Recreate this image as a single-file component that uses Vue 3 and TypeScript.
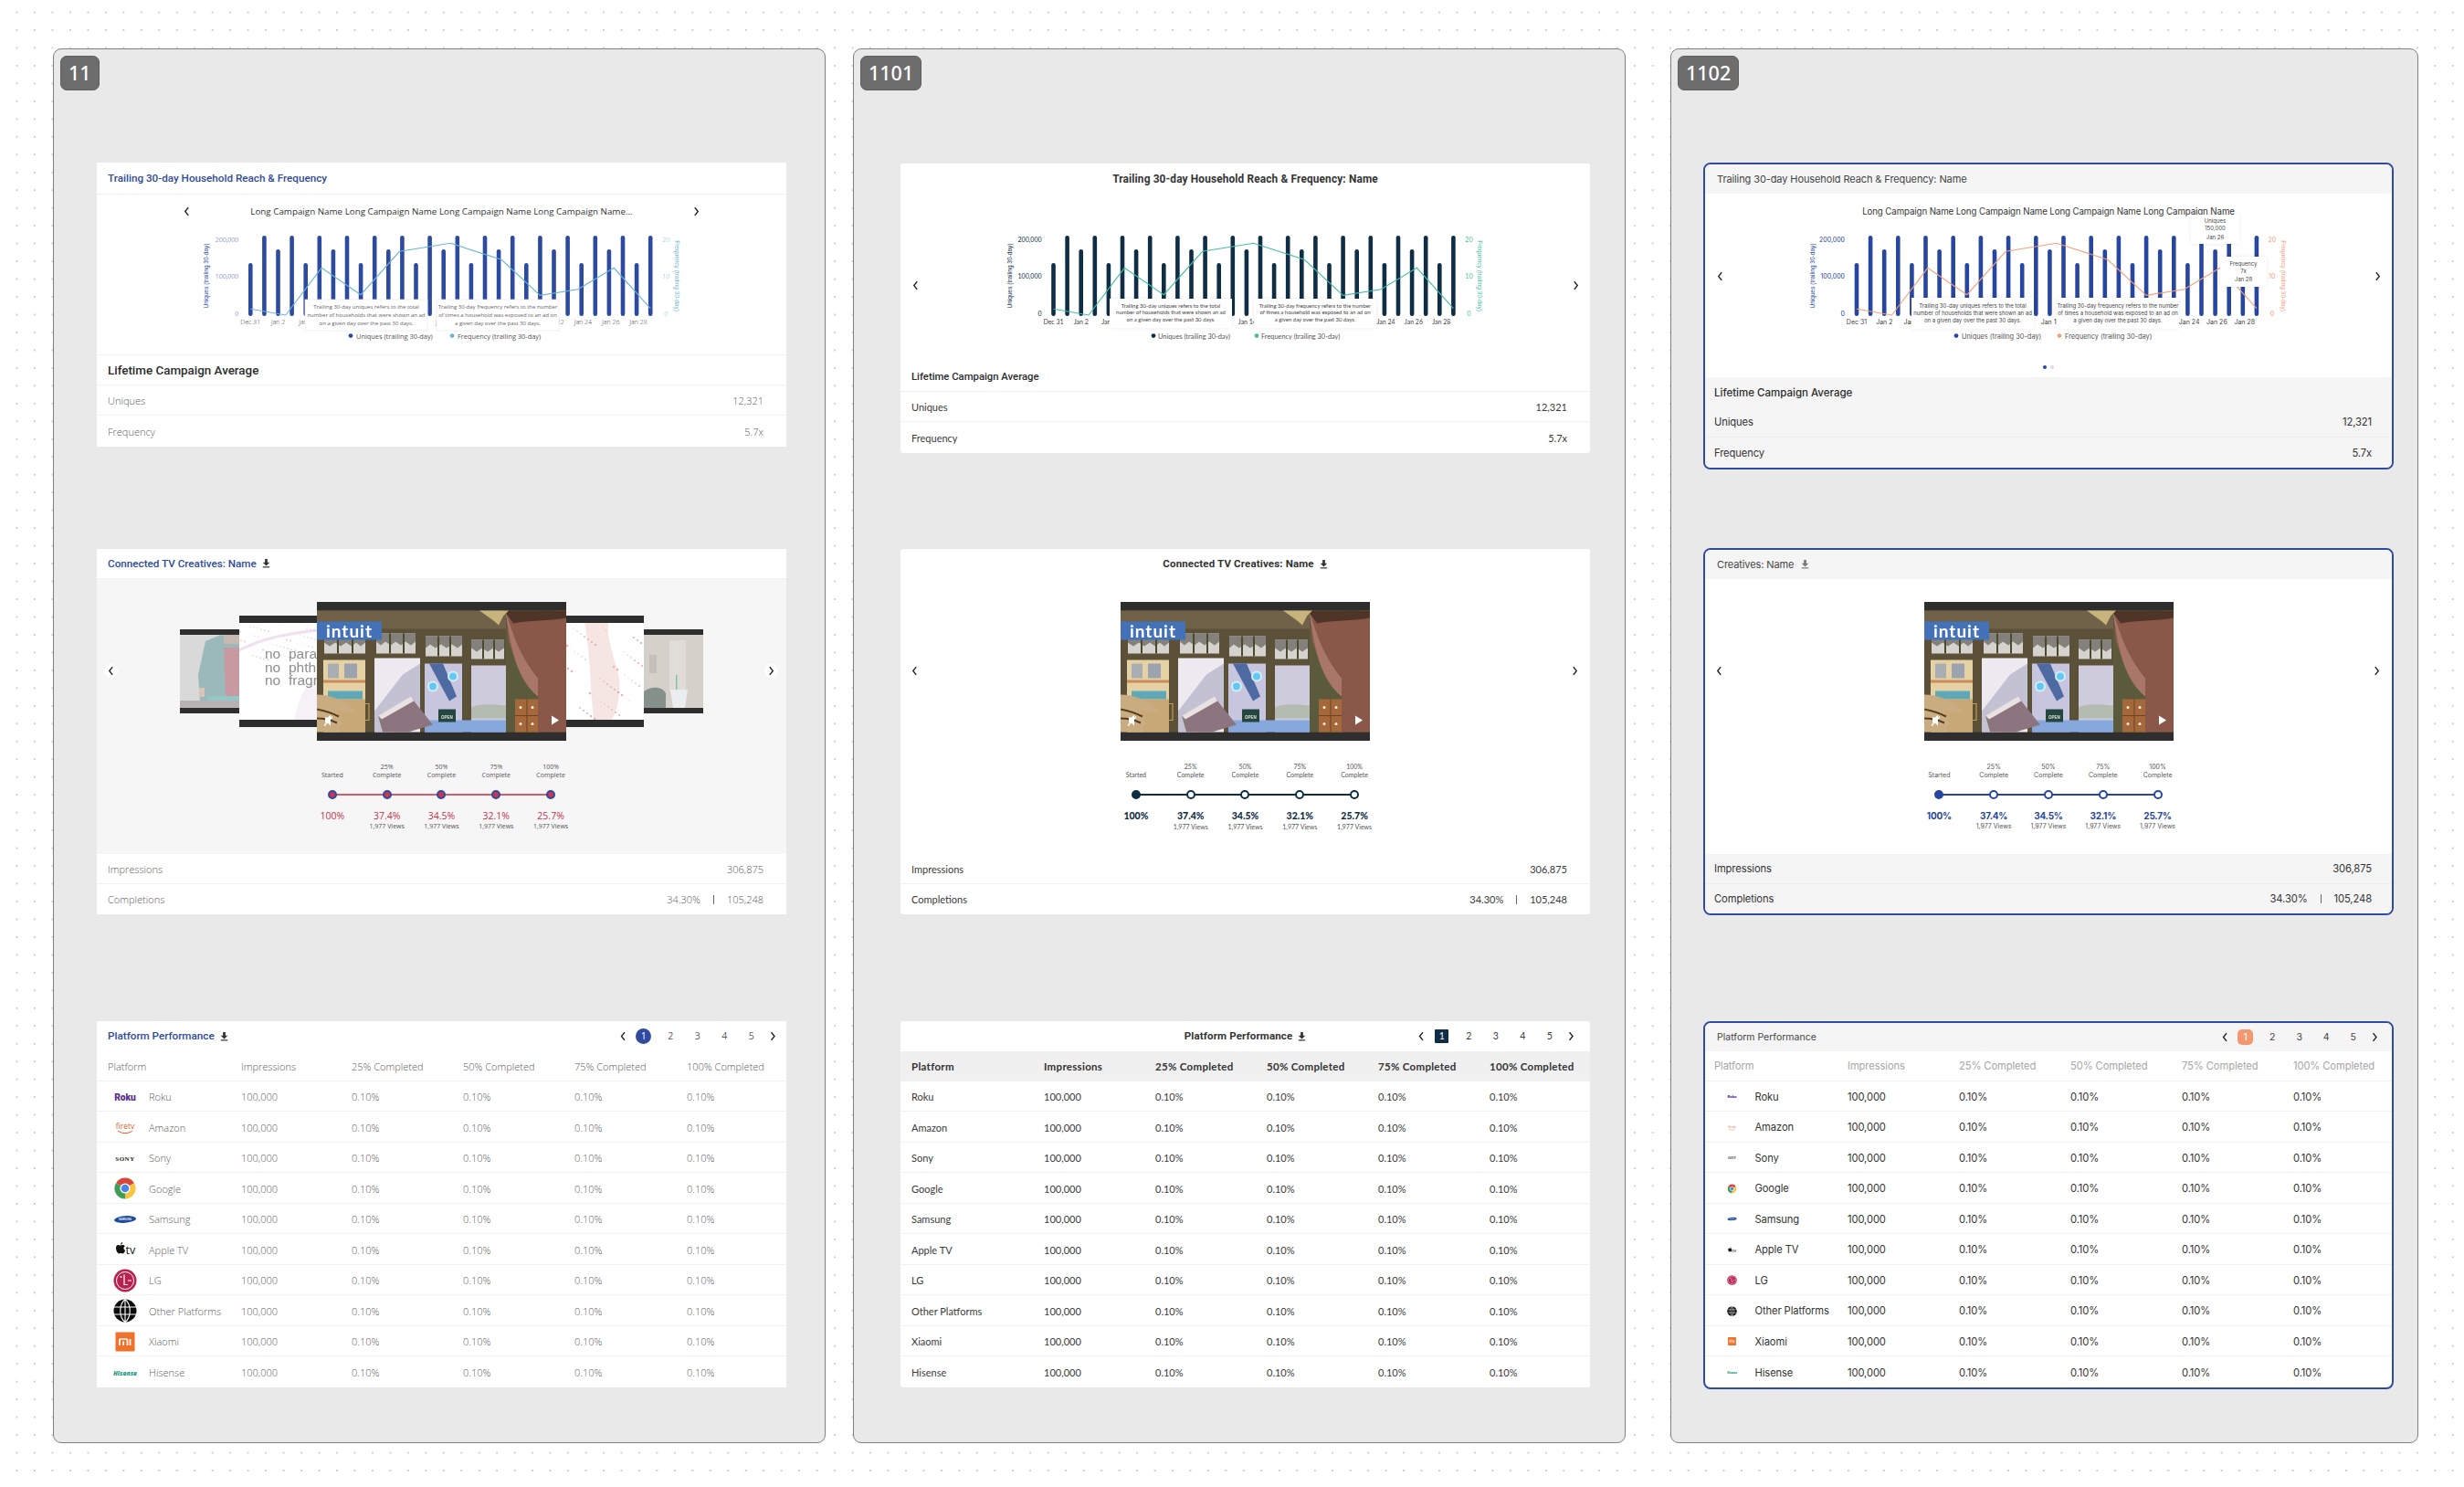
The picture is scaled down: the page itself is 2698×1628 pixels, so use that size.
<script setup lang="ts">
interface FrameConfig {
  id: string
  variant: 'a' | 'b' | 'c'
  reachTitle: string
  chartTitle: string
  creativeTitle: string
  x0: number
  barColor: string
  lineColor: string
  tipA: number
  tipB: number
  tipTop: number
  tipH: number
  tipLines: number[]
  legend: number[]
}

const frames: FrameConfig[] = [
  {
    id: '11', variant: 'a',
    reachTitle: 'Trailing 30-day Household Reach & Frequency',
    chartTitle: 'Long Campaign Name Long Campaign Name Long Campaign Name Long Campaign Name...',
    creativeTitle: 'Connected TV Creatives: Name',
    x0: 168.3, barColor: '#2c4a9f', lineColor: '#6cb4d8',
    tipA: 228, tipB: 372, tipTop: 77, tipH: 34, tipLines: [87, 96, 105],
    legend: [278, 284, 389, 395],
  },
  {
    id: '1101', variant: 'b',
    reachTitle: 'Trailing 30-day Household Reach & Frequency: Name',
    chartTitle: '',
    creativeTitle: 'Connected TV Creatives: Name',
    x0: 167.5, barColor: '#0f2d45', lineColor: '#45bfa0',
    tipA: 229, tipB: 387, tipTop: 76, tipH: 32, tipLines: [85.5, 93, 100.5],
    legend: [277, 282, 390, 395],
  },
  {
    id: '1102', variant: 'c',
    reachTitle: 'Trailing 30-day Household Reach & Frequency: Name',
    chartTitle: 'Long Campaign Name Long Campaign Name Long Campaign Name Long Campaign Name',
    creativeTitle: 'Creatives: Name',
    x0: 166, barColor: '#2746a0', lineColor: '#f4a07a',
    tipA: 226, tipB: 385, tipTop: 75, tipH: 34, tipLines: [86, 94, 102],
    legend: [275, 281, 388, 394],
  },
]

const STEP = 15.1
const DATE_STEP = 15.17
const barHeights = [58, 88, 73, 88]
const bars = Array.from({ length: 30 }, (_, i) => ({ i, h: barHeights[i % 4] }))
const linePts: [number, number][] = [
  [0, 87.3], [2.55, 94], [5.15, 42.3], [8, 71.7], [10.8, 24.3], [14.5, 15.3],
  [18.2, 33.3], [21, 72.3], [23.75, 65.7], [26.35, 42.3], [29, 86.7],
]
const linePath = (x0: number) => linePts.map(([i, y]) => `${x0 + i * STEP},${y}`).join(' ')

// dates that sit fully behind the two info tooltips are left out
const hiddenDates = [6, 8, 10, 12, 16, 18, 20]
const dateLabels = (variant: string) =>
  Array.from({ length: 15 }, (_, i) => ({
    i: i * 2,
    text: i === 0 ? 'Dec 31' : `Jan ${i * 2}`,
  })).filter((d) => !hiddenDates.includes(d.i) && !(d.i === 22 && variant !== 'a'))

const tipText = {
  uniques: [
    'Trailing 30-day uniques refers to the total',
    'number of households that were shown an ad',
    'on a given day over the past 30 days.',
  ],
  frequency: [
    'Trailing 30-day frequency refers to the number',
    'of times a household was exposed to an ad on',
    'a given day over the past 30 days.',
  ],
}

const steps = [
  { top: '', label: 'Started', pct: '100%', views: '' },
  { top: '25%', label: 'Complete', pct: '37.4%', views: '1,977 Views' },
  { top: '50%', label: 'Complete', pct: '34.5%', views: '1,977 Views' },
  { top: '75%', label: 'Complete', pct: '32.1%', views: '1,977 Views' },
  { top: '100%', label: 'Complete', pct: '25.7%', views: '1,977 Views' },
]

const columns = ['Platform', 'Impressions', '25% Completed', '50% Completed', '75% Completed', '100% Completed']
const platforms = ['Roku', 'Amazon', 'Sony', 'Google', 'Samsung', 'Apple TV', 'LG', 'Other Platforms', 'Xiaomi', 'Hisense']

// scattered paint specks for the two white creatives
const specks = Array.from({ length: 60 }, (_, i) => ({
  x: (i * 37) % 85,
  y: (i * 61) % 106,
  r: 0.4 + ((i * 13) % 10) / 10,
}))
</script>

<template>
  <div class="page">
    <section v-for="f in frames" :key="f.id" class="frame" :class="`frame-${f.variant}`">
      <div class="badge">{{ f.id }}</div>

      <div class="card card-reach">
        <div class="card-head">{{ f.reachTitle }}</div>
        <div class="chart-body">
          <div class="chart-title-row">
            <svg v-if="f.variant === 'a'" class="chev" viewBox="0 0 8 12"><path d="M6 1 2 6l4 5" /></svg>
            <span class="chart-title">{{ f.chartTitle }}</span>
            <svg v-if="f.variant === 'a'" class="chev" viewBox="0 0 8 12"><path d="M2 1l4 5-4 5" /></svg>
          </div>
          <template v-if="f.variant !== 'a'">
            <svg class="chev chart-prev" viewBox="0 0 8 12"><path d="M6 1 2 6l4 5" /></svg>
            <svg class="chev chart-next" viewBox="0 0 8 12"><path d="M2 1l4 5-4 5" /></svg>
          </template>

          <svg class="chart" width="751" height="137" viewBox="0 0 751 137">
            <rect
              v-for="b in bars"
              :key="b.i"
              :x="f.x0 + b.i * STEP - 2.3"
              :y="95 - b.h"
              width="4.6"
              :height="b.h"
              rx="2.3"
              :fill="f.barColor"
            />
            <polyline :points="linePath(f.x0)" fill="none" :stroke="f.lineColor" stroke-width="1.1" />

            <g class="tick" :fill="f.barColor">
              <text :x="f.x0 - 13" y="13.5" text-anchor="end">200,000</text>
              <text :x="f.x0 - 13" y="53.5" text-anchor="end">100,000</text>
              <text :x="f.x0 - 13" y="94.5" text-anchor="end">0</text>
              <text class="axis-name" :transform="`translate(${f.x0 - 46} 51) rotate(-90)`" text-anchor="middle">Uniques (trailing 30-day)</text>
            </g>
            <g class="tick" :fill="f.lineColor">
              <text :x="f.x0 + 29 * STEP + 17" y="13.5" text-anchor="middle">20</text>
              <text :x="f.x0 + 29 * STEP + 17" y="53.5" text-anchor="middle">10</text>
              <text :x="f.x0 + 29 * STEP + 17" y="94.5" text-anchor="middle">0</text>
              <text class="axis-name" :transform="`translate(${f.x0 + 29 * STEP + 27} 51) rotate(90)`" text-anchor="middle">Frequency (trailing 30-day)</text>
            </g>
            <text
              v-for="d in dateLabels(f.variant)"
              :key="d.i"
              class="tick date"
              :x="f.x0 + d.i * DATE_STEP"
              y="103.5"
              text-anchor="middle"
            >{{ d.text }}</text>

            <g class="tip-group">
              <rect class="tip" :x="f.tipA" :y="f.tipTop" width="134" :height="f.tipH" />
              <text
                v-for="(t, n) in tipText.uniques"
                :key="t"
                class="tip-text"
                :x="f.tipA + 67"
                :y="f.tipLines[n]"
                text-anchor="middle"
              >{{ t }}</text>
              <rect class="tip" :x="f.tipB" :y="f.tipTop" width="134" :height="f.tipH" />
              <text
                v-for="(t, n) in tipText.frequency"
                :key="t"
                class="tip-text"
                :x="f.tipB + 67"
                :y="f.tipLines[n]"
                text-anchor="middle"
              >{{ t }}</text>
            </g>

            <g v-if="f.variant === 'c'">
              <rect class="tip" x="532" y="-16" width="53" height="32" />
              <text class="tip-text" x="558.5" y="-7" text-anchor="middle">Uniques</text>
              <text class="tip-text" x="558.5" y="1" text-anchor="middle">150,000</text>
              <text class="tip-text" x="558.5" y="11" text-anchor="middle">Jan 26</text>
              <rect class="tip" x="564" y="30" width="51" height="33" />
              <text class="tip-text" x="589.5" y="40" text-anchor="middle">Frequency</text>
              <text class="tip-text" x="589.5" y="48" text-anchor="middle">7x</text>
              <text class="tip-text" x="589.5" y="57" text-anchor="middle">Jan 28</text>
            </g>

            <circle :cx="f.legend[0]" cy="116.6" r="2.4" :fill="f.barColor" />
            <text class="legend" :x="f.legend[1]" y="119.5">Uniques (trailing 30-day)</text>
            <circle :cx="f.legend[2]" cy="116.6" r="2.4" :fill="f.lineColor" />
            <text class="legend" :x="f.legend[3]" y="119.5">Frequency (trailing 30-day)</text>
          </svg>

          <div v-if="f.variant === 'c'" class="pager-dots"><i class="on"></i><i></i></div>
        </div>
        <div class="stat-title">Lifetime Campaign Average</div>
        <div class="stat-row"><span>Uniques</span><span>12,321</span></div>
        <div class="stat-row"><span>Frequency</span><span>5.7x</span></div>
      </div>

      <div class="card card-creative">
        <div class="card-head head-icon">
          <span>{{ f.creativeTitle }}</span>
          <svg class="download" viewBox="0 0 12 14">
            <path d="M4.200 1h3.600v5H11L6 11 1 6h3.200z" />
            <rect x="1" y="12" width="10" height="1.600" />
          </svg>
        </div>
        <div class="creative-body">
          <svg class="chev carousel-prev" viewBox="0 0 8 12"><path d="M6 1 2 6l4 5" /></svg>
          <svg class="chev carousel-next" viewBox="0 0 8 12"><path d="M2 1l4 5-4 5" /></svg>

          <div class="carousel">
            <div v-if="f.variant === 'a'" class="slide slide-far">
              <svg width="65" height="80" viewBox="0 0 65 80">
                <rect width="65" height="80" fill="#c6c6c6" />
                <path d="M28 7 45 0l20 4v70H22l-2-30z" fill="#5c8f93" />
                <path d="M48 14h17v54H50z" fill="#a85964" />
                <rect x="30" y="67" width="35" height="6" fill="#50a7a4" />
                <rect x="48" y="0" width="17" height="10" fill="#a88e84" />
                <path d="M21 58h6v10h-6z" fill="#c2a691" />
                <rect y="72" width="65" height="8" fill="#8e8488" />
                <rect width="65" height="80" fill="#f4f4f4" opacity="0.42" />
              </svg>
            </div>
            <div v-if="f.variant === 'a'" class="slide slide-near">
              <svg width="85" height="106" viewBox="0 0 85 106">
                <rect width="85" height="106" fill="#fff" />
                <path d="M0 30C20 20 35 14 85 8" fill="none" stroke="#f0e0f0" stroke-width="3" />
                <path d="M60 106C66 80 72 70 85 60v46z" fill="#f6f1f6" />
                <circle v-for="(s, n) in specks" :key="n" :cx="s.x" :cy="s.y / 2.6" :r="s.r * 0.8" fill="#e8cde8" />
                <g class="no-text">
                  <text x="28" y="39">no</text><text x="54" y="39">para</text>
                  <text x="28" y="54">no</text><text x="54" y="54">phth</text>
                  <text x="28" y="68">no</text><text x="54" y="68">fragr</text>
                </g>
              </svg>
            </div>

            <div class="slide slide-main">
              <svg width="273" height="134" viewBox="0 0 273 133">
                <rect width="273" height="133" fill="#5a5138" />
                <rect width="273" height="20" fill="#6f6249" />
                <g fill="#d6d3cf">
                  <rect x="8" y="25" width="45" height="22" />
                  <rect x="65" y="25" width="43" height="22" />
                  <rect x="119" y="28" width="40" height="22" />
                  <rect x="169" y="32" width="36" height="21" />
                </g>
                <g fill="#84807c">
                  <path d="M8 25h45v10l-5 4-5-4-5 4-6-4-6 4-6-4-6 4-6-4z" />
                  <path d="M65 25h43v9l-5 4-6-4-5 4-6-4-5 4-6-4-5 4-5-4z" />
                  <path d="M119 28h40v9l-5 4-6-4-6 4-6-4-6 4-6-4-5 4z" />
                  <path d="M169 32h36v9l-6 4-6-4-6 4-6-4-6 4-6-4z" />
                </g>
                <g fill="#4a4a2e">
                  <rect x="22" y="25" width="2" height="22" /><rect x="38" y="25" width="2" height="22" />
                  <rect x="79" y="25" width="2" height="22" /><rect x="94" y="25" width="2" height="22" />
                  <rect x="132" y="28" width="2" height="22" /><rect x="145" y="28" width="2" height="22" />
                  <rect x="181" y="32" width="2" height="21" /><rect x="193" y="32" width="2" height="21" />
                </g>

                <rect x="7" y="54" width="46" height="79" fill="#e5d2a4" />
                <rect x="12" y="58" width="12" height="16" fill="#a9aeb4" />
                <rect x="30" y="58" width="14" height="16" fill="#9ca2ae" />
                <rect x="7" y="76" width="46" height="3" fill="#cc8a5c" />
                <rect x="12" y="88" width="38" height="9" fill="#5fa8ba" />
                <rect x="7" y="97" width="46" height="36" fill="#c9a878" />
                <rect x="63" y="52" width="50" height="81" fill="#eeeaf1" />
                <path d="M63 110 94 70l19-12v50l-30 25H63z" fill="#c4c1d3" />
                <rect x="118" y="58" width="41" height="75" fill="#c8c6df" />
                <rect x="169" y="60" width="38" height="73" fill="#cdcbdc" />
                <path d="M118 120h89v13h-89z" fill="#86a8dc" />
                <path d="M169 106c8-4 20-4 38-2v14h-38z" fill="#b4bcb0" />

                <path d="M123 58h15l15 36-8 5z" fill="#4e6aa3" />
                <circle cx="127" cy="83" r="6" fill="#d6eefa" /><circle cx="127" cy="83" r="4" fill="#62c9f2" />
                <circle cx="149" cy="72" r="6" fill="#d6eefa" /><circle cx="149" cy="72" r="4" fill="#62c9f2" />

                <path d="M67 115 103 95l24 30-27 8H72z" fill="#8c757f" />
                <path d="M67 115 103 94l3 5-35 20z" fill="#e8e2e2" />
                <rect x="133" y="108" width="19" height="14" fill="#27453f" />
                <text class="open-sign" x="142.500" y="118" text-anchor="middle">OPEN</text>
                <path d="M52 102h5v18h-5" fill="none" stroke="#c79b4a" stroke-width="1.200" />

                <rect x="207" y="0" width="36" height="133" fill="#5c5a3c" />
                <rect x="217" y="97" width="26" height="36" fill="#a4683a" />
                <path d="M217 115h26M230 97v36" stroke="#6d4322" stroke-width="1" />
                <circle cx="223" cy="106" r="1.500" fill="#eee" /><circle cx="236" cy="106" r="1.500" fill="#eee" />
                <circle cx="223" cy="124" r="1.500" fill="#eee" /><circle cx="236" cy="124" r="1.500" fill="#eee" />

                <path d="M207 2 273 0v133h-31V82l-19-14-13-33z" fill="#8a5848" />
                <path d="M207 2c8 24 14 46 35 72v20c-22-18-30-50-35-92z" fill="#a9766a" />
                <path d="M205 0h68v8c-20 4-40 2-58 6z" fill="#4f3428" />
                <path d="M178 0h32l-6 6-5 10c-6-6-13-10-21-16z" fill="#c7b37c" />

                <path d="M0 92c14 0 30 6 43 18-10 2-20 0-30-3l14 9-3 17H0z" fill="#c9ad80" />
                <path d="M0 108c10 2 16 4 24 8M0 118c8 0 16 2 22 5" stroke="#54401f" stroke-width="2" fill="none" />

                <rect y="12" width="71" height="20" fill="#4472b8" />
                <text class="intuit" x="10" y="29" textLength="50">intuit</text>

                <path d="M9 117h3l3-3v12l-3-3H9z" fill="#fff" />
                <path d="M17 116l-9 10" stroke="#fff" stroke-width="1.200" />
                <path d="M257 115l8 5-8 5z" fill="#fff" />
              </svg>
            </div>

            <div v-if="f.variant === 'a'" class="slide slide-near">
              <svg width="85" height="106" viewBox="0 0 85 106">
                <rect width="85" height="106" fill="#fff" />
                <path d="M20 0h26c-2 20 8 40 12 60 2 20-2 34-8 46H30C26 70 26 30 20 0z" fill="#f6e6e3" />
                <circle v-for="(s, n) in specks" :key="n" :cx="s.x" :cy="s.y" :r="s.r" fill="#e3b3ad" />
              </svg>
            </div>
            <div v-if="f.variant === 'a'" class="slide slide-far">
              <svg width="65" height="80" viewBox="0 0 65 80">
                <rect width="65" height="80" fill="#cbc4bd" />
                <rect x="28" y="6" width="18" height="56" fill="#dad6d1" />
                <rect x="6" y="22" width="8" height="20" fill="#b6aea8" />
                <path d="M0 62c8-6 20-6 24 2v16H0z" fill="#63706a" />
                <path d="M29 60h19l-3 20H32z" fill="#e9ecec" />
                <rect x="35" y="44" width="1.500" height="16" fill="#57b08e" />
                <rect width="65" height="80" fill="#f4f4f4" opacity="0.25" />
              </svg>
            </div>
          </div>

          <div class="steps">
            <div v-for="(s, n) in steps" :key="s.pct" class="step">
              <div class="step-label"><span v-if="s.top">{{ s.top }}</span><span>{{ s.label }}</span></div>
              <span class="step-dot" :class="{ first: n === 0 }"></span>
              <div class="step-pct">{{ s.pct }}</div>
              <div class="step-views">{{ s.views }}</div>
            </div>
          </div>
        </div>
        <div class="stat-row"><span>Impressions</span><span>306,875</span></div>
        <div class="stat-row">
          <span>Completions</span>
          <span class="split"><span>34.30%</span><i></i><span>105,248</span></span>
        </div>
      </div>

      <div class="card card-table">
        <div class="table-head">
          <div class="head-icon table-title">
            <span>Platform Performance</span>
            <svg class="download" viewBox="0 0 12 14">
              <path d="M4.200 1h3.600v5H11L6 11 1 6h3.200z" />
              <rect x="1" y="12" width="10" height="1.600" />
            </svg>
          </div>
          <div class="pager">
            <svg class="chev" viewBox="0 0 8 12"><path d="M6 1 2 6l4 5" /></svg>
            <span v-for="p in 5" :key="p" class="page-num" :class="{ active: p === 1 }"><b>{{ p }}</b></span>
            <svg class="chev" viewBox="0 0 8 12"><path d="M2 1l4 5-4 5" /></svg>
          </div>
        </div>
        <div class="t-row t-header">
          <span v-for="c in columns" :key="c">{{ c }}</span>
        </div>
        <div v-for="p in platforms" :key="p" class="t-row">
          <span class="platform">
            <svg v-if="f.variant !== 'b'" class="logo" viewBox="0 0 26 26">
              <text v-if="p === 'Roku'" class="l-roku" x="13" y="16.500" text-anchor="middle">Roku</text>
              <g v-else-if="p === 'Amazon'">
                <text class="l-fire" x="13" y="15" text-anchor="middle">firetv</text>
                <path d="M5 17c5 3.500 11 3.500 16 0" fill="none" stroke="#e4622f" stroke-width="1" />
              </g>
              <text v-else-if="p === 'Sony'" class="l-sony" x="13" y="16" text-anchor="middle">SONY</text>
              <g v-else-if="p === 'Google'">
                <path d="M13 13 3 7.250A11.500 11.500 0 0 1 23 7.250z" fill="#d9473b" />
                <path d="M13 13 23 7.250A11.500 11.500 0 0 1 13 24.500z" fill="#f6c73e" />
                <path d="M13 13 13 24.500A11.500 11.500 0 0 1 3 7.250z" fill="#3f9d58" />
                <circle cx="13" cy="13" r="5.600" fill="#fff" />
                <circle cx="13" cy="13" r="4.300" fill="#4a86e8" />
              </g>
              <g v-else-if="p === 'Samsung'">
                <ellipse cx="13" cy="13" rx="12" ry="3.800" fill="#1b4a9f" transform="rotate(-4 13 13)" />
                <text class="l-sam" x="13" y="14.300" text-anchor="middle">SAMSUNG</text>
              </g>
              <g v-else-if="p === 'Apple TV'">
                <path d="M5 8c1 0 1.800.6 2.600.6S9.300 8 10.400 8c.9 0 1.900.5 2.400 1.300-1.900 1.100-1.600 3.900.4 4.700-.5 1.400-1.600 3.400-2.800 3.400-.8 0-1.200-.5-2.100-.5s-1.400.5-2.100.5C4.900 17.400 3 14.400 3 11.600 3 9.400 4.100 8 5 8zM8 7.600c0-1.300 1-2.400 2.200-2.600.1 1.400-1 2.600-2.200 2.600z" fill="#111" />
                <text class="l-tv" x="13.500" y="18">tv</text>
              </g>
              <g v-else-if="p === 'LG'">
                <circle cx="13" cy="13" r="12.500" fill="#b8214f" />
                <circle cx="13" cy="13" r="9.500" fill="none" stroke="#fff" stroke-width="1" />
                <path d="M12 6.500v11h4M20 13h-4" fill="none" stroke="#fff" stroke-width="1.200" />
                <circle cx="8.500" cy="9" r="1.100" fill="#fff" />
              </g>
              <g v-else-if="p === 'Other Platforms'">
                <circle cx="13" cy="13" r="12.500" fill="#0c0c0c" />
                <path d="M.5 9h25M.5 17h25M13 .5v25M13 .5C6 6 6 20 13 25.500M13 .5C20 6 20 20 13 25.500" fill="none" stroke="#fff" stroke-width="1.100" />
              </g>
              <g v-else-if="p === 'Xiaomi'">
                <rect x="2.500" y="2.500" width="21" height="21" rx="1" fill="#f1702a" />
                <path d="M7 10h7c1 0 1.500.5 1.500 1.500V17M7 10v7M11.200 12.500V17M18.500 10v7" fill="none" stroke="#fff" stroke-width="1.700" />
              </g>
              <text v-else class="l-his" x="13" y="15.500" text-anchor="middle">Hisense</text>
            </svg>
            {{ p }}
          </span>
          <span>100,000</span>
          <span v-for="n in 4" :key="n">0.10%</span>
        </div>
      </div>
    </section>
  </div>
</template>

<style scoped>
.page {
  display: flex;
  align-items: flex-start;
  height: 1628px;
  padding: 53px 0 0 58px;
  box-sizing: border-box;
  overflow: hidden;
}

.frame {
  position: relative;
  box-sizing: border-box;
  flex: none;
  width: 846px;
  height: 1527px;
  padding: 6.500px 0 0 7px;
  background: #e9e9e9;
  border: 1.500px solid #808080;
  border-radius: 9px;
}
.frame-a { font-family: "Open Sans", sans-serif; color: #5c5c5c; }
.frame-b { margin-left: 30px; font-family: "Lato", sans-serif; color: #3a3a3a; }
.frame-c { margin-left: 49px; width: 819px; font-family: "Inter", sans-serif; color: #333; }

.badge {
  display: inline-block;
  box-sizing: border-box;
  height: 38px;
  padding: 0 8px;
  background: #6d6d6d;
  border: 1.500px solid #5f5f5f;
  border-radius: 7px;
  color: #fff;
  font: 500 21.500px/35px "Noto Sans", sans-serif;
  vertical-align: top;
}

.card {
  width: 755px;
  background: #fff;
  box-sizing: border-box;
  overflow: hidden;
}
.frame-a .card { margin-left: 40px; }
.frame-b .card { margin-left: 44px; border-radius: 3px; }
.frame-c .card { margin-left: 28px; width: 756px; border: 2px solid #2f4a9e; border-radius: 8px; }

.card-reach { margin-top: 79px; }
.frame-b .card-reach { margin-top: 80px; }
.card-creative { margin-top: 112px; }
.frame-b .card-creative { margin-top: 105px; }
.frame-c .card-creative { margin-top: 86px; }
.card-table { margin-top: 117px; }
.frame-c .card-table { margin-top: 116px; }

.card-head {
  display: flex;
  align-items: center;
  box-sizing: border-box;
  height: 35px;
  padding-left: 12px;
  font-size: 11.700px;
}
.frame-a .card-head,
.frame-a .table-title {
  font-family: "Roboto", sans-serif;
  font-weight: 500;
  color: #2f4a9e;
}
.frame-a .card-head { border-bottom: 1px solid #f0f0f0; }
.frame-a .card-creative .card-head { height: 33px; }
.frame-b .card-head,
.frame-b .table-title {
  justify-content: center;
  padding-left: 0;
  font-family: "Roboto", sans-serif;
  font-weight: 700;
  font-size: 11.500px;
  letter-spacing: 0.15px;
  color: #333;
}
.frame-b .card-reach .card-head { font-size: 11.850px; }
.frame-b .card-creative .card-head { height: 33px; }
.frame-c .card-head {
  height: 32px;
  padding-left: 13px;
  background: #f5f5f5;
  font-size: 11px;
  letter-spacing: -0.1px;
  color: #444;
}

.head-icon { gap: 6px; }
.download { width: 9px; height: 11px; fill: #333; }
.frame-c .download { fill: #777; margin-left: 2px; }

.chart-body { position: relative; }
.chart-title-row {
  display: flex;
  align-items: center;
  justify-content: center;
  gap: 66px;
  height: 38px;
  box-sizing: border-box;
  font-size: 9.800px;
  color: #333;
}
.frame-b .chart-title-row { height: 37px; }
.frame-c .chart-title-row { height: 39px; font-size: 9.700px; letter-spacing: -0.1px; }

.chev {
  flex: none;
  width: 7px;
  height: 11px;
  fill: none;
  stroke: #222;
  stroke-width: 1.600;
}
.chart-prev, .chart-next, .carousel-prev, .carousel-next { position: absolute; }
.frame-b .chart-prev, .frame-b .chart-next { top: 93px; }
.frame-c .chart-prev, .frame-c .chart-next { top: 85px; }
.chart-prev { left: 13px; }
.chart-next { right: 12px; }

.chart { display: block; overflow: visible; }
.frame-b .chart { margin-bottom: 9px; }
.tick text { font-size: 7px; }
.frame-a .tick { font-weight: 300; }
.axis-name { font-family: "Liberation Sans", sans-serif; }
.tick .axis-name { font-size: 6.500px; }
.date { font-size: 7px; fill: #444; }
.tip { fill: #fff; }
.frame-a .tip { stroke: #e8e8e8; stroke-width: 0.700; }
.frame-b .tip, .frame-c .tip { filter: drop-shadow(0 0 2px rgba(0, 0, 0, 0.08)); }
.tip-text { font-size: 6px; fill: #666; }
.frame-b .tip-text, .frame-c .tip-text { fill: #444; }
.legend { font-size: 7.400px; fill: #555; }

.pager-dots {
  display: flex;
  justify-content: center;
  gap: 4px;
  height: 25px;
  padding-top: 12px;
  box-sizing: border-box;
}
.pager-dots i { width: 4px; height: 4px; border-radius: 50%; background: #dcdcdc; }
.pager-dots i.on { background: #2746a0; }

.stat-title {
  display: flex;
  align-items: center;
  box-sizing: border-box;
  height: 34px;
  padding: 1.500px 0 0 12px;
  font-family: "Roboto", sans-serif;
  font-weight: 500;
  font-size: 13.400px;
  color: #2c2c2c;
}
.frame-a .stat-title { border-top: 1px solid #f2f2f2; border-bottom: 1px solid #f2f2f2; }
.frame-b .stat-title { height: 32px; font-size: 11.300px; border-bottom: 1px solid #f0f0f0; }
.frame-c .stat-title { height: 33px; padding-left: 10px; background: #f5f5f5; font-size: 11.500px; font-family: "Inter", sans-serif; }

.stat-row {
  display: flex;
  align-items: center;
  justify-content: space-between;
  box-sizing: border-box;
  height: 33.500px;
  padding: 1.500px 25px 0 12px;
  border-bottom: 1px solid #f2f2f2;
  font-size: 11px;
}
.stat-row:last-child { border-bottom: 0; }
.frame-a .stat-row { font-weight: 300; }
.frame-c .stat-row { height: 33px; padding: 1.500px 22px 0 10px; background: #f5f5f5; border-bottom-color: #eee; font-size: 11.200px; letter-spacing: -0.1px; }
.card-creative .stat-row { height: 33px; }
.frame-c .card-creative .stat-row:last-child { height: 32px; }
.split { display: flex; align-items: center; }
.split i { width: 1px; height: 10px; margin: 0 14px; background: #666; }

.creative-body {
  position: relative;
  display: flex;
  flex-direction: column;
  align-items: center;
  box-sizing: border-box;
  height: 301px;
  padding-top: 25px;
}
.frame-a .creative-body { background: #f6f6f6; }
.carousel-prev { left: 12px; top: 95px; }
.carousel-next { right: 13px; top: 95px; }
.frame-a .carousel-prev, .frame-a .carousel-next {
  box-sizing: content-box;
  padding: 2px 4px;
  background: #fff;
  border-radius: 50%;
  top: 93px;
}
.frame-a .carousel-prev { left: 8px; }
.frame-a .carousel-next { right: 9px; }

.carousel { display: flex; align-items: center; height: 152px; }
.slide { flex: none; overflow: hidden; background: #2e2e2e; }
.slide svg { display: block; filter: blur(0.4px); }
.slide-main { width: 273px; height: 152px; padding: 9px 0; box-sizing: border-box; }
.slide-near { width: 85px; height: 122px; padding: 8px 0; box-sizing: border-box; }
.slide-far { width: 65px; height: 92px; padding: 6px 0; box-sizing: border-box; }
.no-text { font: 15.500px "Liberation Sans", sans-serif; fill: #8e8e8e; }
.open-sign { font: 700 4.500px "Liberation Sans", sans-serif; fill: #dfe8e0; }
.intuit { font: 700 19px "Lato", sans-serif; fill: #fff; }

.steps { position: relative; display: flex; margin-top: 24px; }
.steps::before {
  content: "";
  position: absolute;
  left: 30px;
  right: 30px;
  top: 34.500px;
  height: 2px;
  background: #c8606f;
}
.frame-b .steps::before { background: #0f2d45; }
.frame-c .steps::before { background: #2746a0; }
.step { width: 59.800px; display: flex; flex-direction: column; align-items: center; text-align: center; }
.step-label {
  display: flex;
  flex-direction: column;
  justify-content: flex-end;
  height: 19px;
  font-size: 7px;
  line-height: 9.500px;
  color: #555;
}
.step-dot {
  position: relative;
  box-sizing: border-box;
  width: 10px;
  height: 10px;
  margin-top: 11px;
  border-radius: 50%;
  background: #c8364f;
  border: 2.500px solid #2f4a9e;
}
.frame-b .step-dot { background: #fff; border-color: #0f2d45; }
.frame-b .step-dot.first { background: #0f2d45; }
.frame-c .step-dot { background: #fff; border-color: #2746a0; }
.frame-c .step-dot.first { background: #2746a0; }
.step-pct { margin-top: 12px; font-size: 10.500px; line-height: 13px; color: #c0354f; }
.frame-b .step-pct { font-weight: 900; color: #0f2d45; }
.frame-c .step-pct { font-weight: 700; font-size: 10px; letter-spacing: -0.2px; color: #2746a0; }
.step-views { height: 10px; font-size: 7px; line-height: 10px; color: #555; }

.table-head {
  display: flex;
  align-items: center;
  justify-content: space-between;
  height: 33px;
  padding-left: 12px;
}
.frame-b .table-head {
  display: grid;
  grid-template-columns: 1fr auto 1fr;
  padding-left: 0;
}
.frame-b .table-head .table-title { grid-column: 2; }
.frame-c .table-head { height: 31px; padding-left: 13px; background: #f5f5f5; color: #444; }
.frame-c .table-head .download { display: none; }
.table-title { display: flex; align-items: center; font-size: 11.700px; }
.frame-c .table-title { font-size: 10.500px; }

.pager { display: flex; align-items: center; padding-right: 7px; font-size: 10.500px; }
.frame-b .pager { justify-self: end; padding-right: 13px; }
.frame-c .pager { padding-right: 11px; }
.page-num { display: flex; justify-content: center; width: 29.500px; }
.page-num b {
  display: block;
  width: 17px;
  height: 17px;
  font-weight: 400;
  line-height: 17px;
  text-align: center;
}
.pager .chev { padding: 0 4.750px; }
.page-num.active b { background: #2f4a9e; border-radius: 50%; color: #fff; }
.frame-b .page-num.active b { width: 15px; height: 15px; line-height: 15px; background: #0f2d45; border-radius: 1px; }
.frame-c .page-num.active b { background: #f4996f; border-radius: 5px; }

.t-row {
  display: grid;
  grid-template-columns: 146px 122px 122px 122px 122px 1fr;
  align-items: center;
  box-sizing: border-box;
  height: 33.500px;
  padding: 1.500px 0 0 12px;
  border-bottom: 1px solid #f2f2f2;
  font-size: 11px;
}
.t-row:last-child { border-bottom: 0; }
.frame-a .t-row { font-weight: 300; grid-template-columns: 146px 121px 122px 122px 123px 1fr; }
.frame-b .t-row { grid-template-columns: 145px 122px 122px 122px 122px 1fr; }
.frame-c .t-row { padding-left: 10px; font-size: 11.200px; letter-spacing: -0.1px; }
.t-header { height: 33px; }
.frame-b .t-header { background: #f0f0f0; font-weight: 700; font-size: 11.500px; letter-spacing: 0.3px; color: #333; }
.frame-c .t-header { color: #a6a6a6; }

.platform { display: flex; align-items: center; }
.logo {
  flex: none;
  width: 26px;
  height: 26px;
  margin: 0 13px 0 6px;
  overflow: visible;
}
.frame-c .logo { width: 11px; height: 11px; margin: 0 20px 0 13.500px; }
.l-roku { font: 900 10.200px "Roboto", sans-serif; fill: #5a2d91; }
.l-fire { font: 400 8.500px "Open Sans", sans-serif; fill: #e4622f; }
.l-sony { font: 700 7px "Liberation Serif", serif; fill: #222; letter-spacing: 0.5px; }
.l-sam { font: 700 2.800px "Open Sans", sans-serif; fill: #e6ecf8; }
.l-tv { font: 400 12.500px "Open Sans", sans-serif; fill: #111; }
.l-his { font: italic 800 6.800px "Open Sans", sans-serif; fill: #2a9b88; }
</style>

<style>
html,
body {
  margin: 0;
  background-color: #fff;
  background-image: radial-gradient(circle, #cfcfcf 0.9px, transparent 1.3px);
  background-size: 19.470px 19.470px;
  background-position: 8.800px 3.800px;
}
</style>
